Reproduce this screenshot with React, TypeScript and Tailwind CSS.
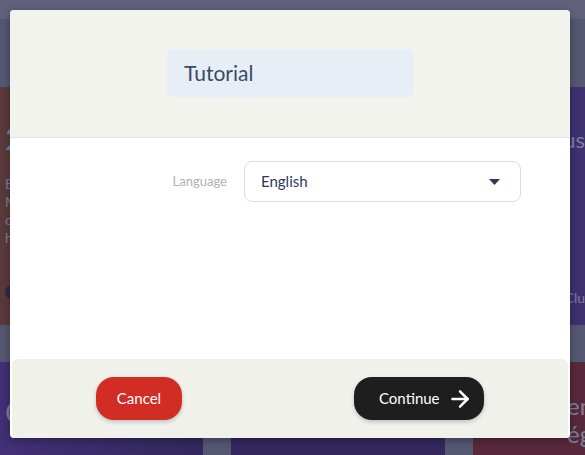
import { ArrowRight } from 'lucide-react'

const FONT = { fontFamily: "Lato, 'Open Sans', sans-serif" }

export default function App() {
  return (
    <main className="relative w-[585px] h-[455px] overflow-hidden bg-[#565772]" style={FONT}>

      {/* Dimmed page behind the dialog */}
      <div className="h-[19px] bg-[#61617e]" />
      <div className="pt-[68px] flex flex-col gap-[37px]">
        <div className="flex gap-[28px] h-[238px]">
          <div className="w-[279px] bg-[#5a3a3c] px-[5px] pt-[36px] overflow-hidden text-[#7b809e]">
            <div className="text-[30px] leading-none">2024</div>
            <div className="mt-[22px] text-[14px] leading-[18px]">
              <p>Entrez</p><p>Mettez</p><p>ou cr</p><p>h</p>
            </div>
            <div className="mt-[38px] w-[14px] h-[14px] rounded-full bg-[#2e2d3c]" />
          </div>
          <div className="flex-1 bg-[#3f3070] pt-[42px] overflow-hidden text-[#7b809e] text-right">
            <div className="text-[22px] leading-none">Plus</div>
            <div className="mt-[140px] text-[14px] leading-none">Clu</div>
          </div>
        </div>
        <div className="flex gap-[28px] h-[100px]">
          <div className="w-[203px] bg-gradient-to-r from-[#413075] to-[#32285d] px-[5px] pt-[36px] text-[#7b809e] text-[28px] leading-none">Cré</div>
          <div className="w-[214px] bg-[#34275e]" />
          <div className="flex-1 bg-[#58293b] pl-[94px] pt-[30px] text-[#7b809e] text-[24px] leading-[28px] whitespace-nowrap overflow-hidden">
            <p>em</p><p>ég</p>
          </div>
        </div>
      </div>

      {/* Dialog */}
      <div className="absolute left-[10px] top-[10px] w-[560px] h-[428px] rounded-[4px] bg-white overflow-hidden shadow-[0_2px_8px_rgba(0,0,0,0.35)] flex flex-col">
        <header className="h-[128px] bg-[#f3f3ee] border-b border-[#dde4ee] flex justify-center pt-[39px]">
          <div className="w-[246px] h-[48px] rounded-[5px] bg-[#e7eef5] pl-[17px] flex items-center text-[21px] text-[#3b4a66]">
            Tutorial
          </div>
        </header>

        <section className="flex-1 pt-[23px]">
          <div className="flex items-center gap-[17px]">
            <label className="w-[217px] text-right text-[13px] text-[#b0b0b0]">Language</label>
            <div className="w-[277px] h-[41px] rounded-[8px] border border-[#dcdcdc] flex items-center justify-between pl-[16px] pr-[20px] text-[15px] text-[#2d3a55]">
              <span>English</span>
              <svg width="11" height="6" viewBox="0 0 11 6"><path d="M0 0h11L5.5 6z" fill="#2d3a55" /></svg>
            </div>
          </div>
        </section>

        <footer className="h-[79px] mx-[2px] rounded-t-[6px] bg-[#f1f1ec] flex items-start justify-between px-[84px] pt-[18px]">
          <button className="w-[86px] h-[43px] rounded-[18px] bg-[#d12d24] text-white text-[15px] shadow-[0_2px_4px_rgba(0,0,0,0.2)]">
            Cancel
          </button>
          <button className="w-[130px] h-[43px] rounded-[18px] bg-[#1f1e1e] text-white text-[15px] flex items-center pl-[25px] gap-[7px] shadow-[0_2px_4px_rgba(0,0,0,0.2)]">
            Continue
            <ArrowRight size={26} strokeWidth={2.3} />
          </button>
        </footer>
      </div>
    </main>
  )
}
